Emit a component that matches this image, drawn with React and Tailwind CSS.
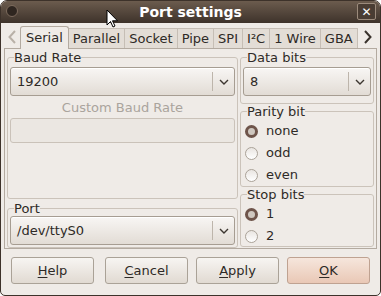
import { useState } from 'react';

const tabs = ['Serial', 'Parallel', 'Socket', 'Pipe', 'SPI', 'I²C', '1 Wire', 'GBA'];

const Chevron = () => (
  <svg width="10" height="6" viewBox="0 0 10 6" className="text-[#3c3630]">
    <path d="M1 1l4 4 4-4" fill="none" stroke="currentColor" strokeWidth="1.4" />
  </svg>
);

const Combo = ({ value }) => (
  <div className="flex h-[29px] items-stretch rounded-[3px] border border-[#a69d92] bg-gradient-to-b from-[#f8f6f4] to-[#e2dcd5] shadow-[inset_0_1px_0_#fff]">
    <span className="flex flex-1 items-center pl-[6px] text-[#2e2a26]">{value}</span>
    <span className="my-[4px] w-px bg-[#bdb5ab]" />
    <span className="flex w-[21px] items-center justify-center">
      <Chevron />
    </span>
  </div>
);

const Radio = ({ checked, label }) => (
  <label className="flex h-[22px] items-center gap-[8px] pl-[2px] text-[#2e2a26]">
    {checked ? (
      <span className="h-[13px] w-[13px] rounded-full border-[3px] border-[#6e544a] bg-[#cfc7bf]" />
    ) : (
      <span className="h-[13px] w-[13px] rounded-full border border-[#aaa298] bg-gradient-to-b from-[#e9e5e1] to-white" />
    )}
    {label}
  </label>
);

const Frame = ({ title, className, children }) => (
  <fieldset className={`rounded-[3px] border border-[#cbc3ba] px-[2px] ${className}`}>
    <legend className="ml-[4px] leading-[15px] text-[#2e2a26]">{title}</legend>
    {children}
  </fieldset>
);

const Button = ({ letter, rest, primary, className = '' }) => (
  <button
    className={`h-[27px] w-[83px] rounded-[3px] border text-[#2e2a26] ${className} ${
      primary
        ? 'border-[#bfa291] bg-gradient-to-b from-[#f6e6dc] to-[#e9c8b6]'
        : 'border-[#aaa297] bg-gradient-to-b from-[#f7f5f2] to-[#e1dad2]'
    }`}
  >
    <span className="underline underline-offset-2">{letter}</span>
    {rest}
  </button>
);

export default function App() {
  const [tab] = useState('Serial');

  return (
    <div className="relative h-[296px] w-[381px] bg-white font-['DejaVu_Sans',sans-serif] text-[13px]">
      <div className="flex h-full flex-col overflow-hidden rounded-t-[7px] rounded-b-[5px] border border-[#3d322a] bg-[#efebe7]">
        <div className="relative flex h-[22px] shrink-0 items-center justify-center bg-gradient-to-b from-[#6c5c4e] to-[#3e332b]">
          <span className="absolute left-[5px] top-[4px] h-[12px] w-[12px] rounded-full border border-[#7d6b5d] bg-[#2f2620]" />
          <span className="text-[14px] font-bold text-white">Port settings</span>
          <span className="absolute right-[4px] top-[2px] flex h-[17px] w-[19px] items-center justify-center rounded-[2px] border border-[#9c8b7c] bg-[#4a3d33] text-[12px] font-bold text-white">
            ✕
          </span>
        </div>

        <div className="flex h-[25px] shrink-0 items-end whitespace-nowrap pl-[3px] pt-[3px]">
          <span className="flex h-[22px] w-[16px] shrink-0 items-center justify-center text-[#b9b1a8]">
            <svg width="8" height="14" viewBox="0 0 8 14">
              <path d="M7 1L1.5 7 7 13" fill="none" stroke="currentColor" strokeWidth="2" />
            </svg>
          </span>
          <div className="flex shrink-0 items-end">
            {tabs.map((t) => (
              <span
                key={t}
                className={
                  t === tab
                    ? 'relative -mb-px flex h-[23px] items-center rounded-t-[3px] border border-b-0 border-[#b3aaa0] bg-[#efebe7] px-[5px] text-[#2e2a26]'
                    : 'flex h-[20px] items-center border-r border-t border-[#c6beb5] bg-[#e3ddd6] px-[4px] text-[#2e2a26]'
                }
              >
                {t}
              </span>
            ))}
          </div>
          <span className="ml-[2px] flex h-[22px] w-[16px] shrink-0 items-center justify-center text-[#3a332d]">
            <svg width="8" height="14" viewBox="0 0 8 14">
              <path d="M1 1l5.5 6L1 13" fill="none" stroke="currentColor" strokeWidth="2" />
            </svg>
          </span>
        </div>

        <div className="mx-[3px] flex h-[201px] shrink-0 gap-[2px] border border-[#b3aaa0] px-[2px] pt-[1px]">
          <div className="flex w-[231px] flex-col gap-[2px]">
            <Frame title="Baud Rate" className="h-[149px]">
              <div className="mt-[2px]">
                <Combo value="19200" />
              </div>
              <div className="mt-[3px] text-center leading-[18px] text-[#aaa49d]">Custom Baud Rate</div>
              <div className="mt-[1px] h-[25px] rounded-[3px] border border-[#cac2b9] bg-[#ebe7e2]" />
            </Frame>
            <Frame title="Port" className="h-[47px]">
              <Combo value="/dev/ttyS0" />
            </Frame>
          </div>
          <div className="flex flex-1 flex-col">
            <Frame title="Data bits" className="h-[54px]">
              <div className="mt-[2px]">
                <Combo value="8" />
              </div>
            </Frame>
            <Frame title="Parity bit" className="h-[83px]">
              <div className="mt-[1px]">
                <Radio checked label="none" />
                <Radio label="odd" />
                <Radio label="even" />
              </div>
            </Frame>
            <Frame title="Stop bits" className="h-[60px]">
              <div className="mt-[1px]">
                <Radio checked label="1" />
                <Radio label="2" />
              </div>
            </Frame>
          </div>
        </div>

        <div className="flex gap-[8px] pl-[10px] pt-[8px]">
          <Button letter="H" rest="elp" className="mr-[3px]" />
          <Button letter="C" rest="ancel" />
          <Button letter="A" rest="pply" />
          <Button letter="O" rest="K" primary />
        </div>
      </div>

      <svg className="absolute left-[106px] top-[9px]" width="12" height="19" viewBox="0 0 12 19">
        <path d="M1 1v15l3.5-3.5 2.5 5.5 2-1-2.5-5.2H11.5z" fill="#fff" stroke="#000" strokeWidth="1" strokeLinejoin="round" />
      </svg>
    </div>
  );
}
